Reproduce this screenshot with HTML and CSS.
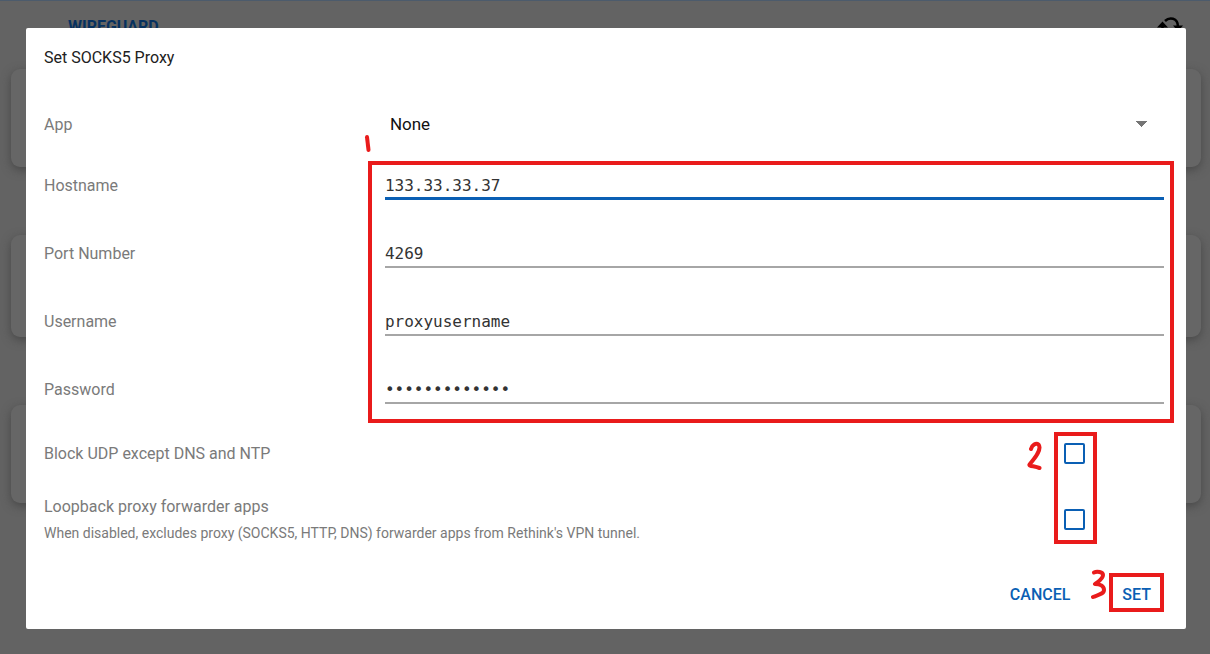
FILE: index.html
```html
<!DOCTYPE html>
<html lang="en">
<head>
<meta charset="utf-8">
<meta name="viewport" content="width=device-width, initial-scale=1">
<title>Set SOCKS5 Proxy</title>
<link rel="stylesheet" href="styles.css">
</head>
<body>
<div class="page" aria-hidden="true">
  <header class="page-header">
    <span class="page-title">WIREGUARD</span>
    <svg class="refresh" viewBox="0 0 28 28" fill="none" stroke="#000">
      <path stroke-width="2.500" d="M9 6C13 2 22 2 22 12M19 22C15 26 6.500 25 6.500 16V10"/>
      <path d="M17 10.500h10l-5 6zM1 12.500h11l-5.500-6z" fill="#000" stroke="none"/>
    </svg>
  </header>
  <div class="cards">
    <div class="card"></div>
    <div class="card card-tall"></div>
    <div class="card"></div>
  </div>
</div>
<main class="overlay">
  <form class="dialog" role="dialog" aria-labelledby="dialog-title">
    <h1 class="title" id="dialog-title">Set SOCKS5 Proxy</h1>
    <div class="row app-row">
      <label for="app">App</label>
      <select class="select" id="app"><option>None</option></select>
    </div>
    <div class="fields">
      <label for="host">Hostname</label>
      <input class="field field-active" id="host" type="text" value="133.33.33.37">
      <label for="port">Port Number</label>
      <input class="field" id="port" type="text" value="4269">
      <label for="user">Username</label>
      <input class="field" id="user" type="text" value="proxyusername">
      <label for="pass">Password</label>
      <input class="field" id="pass" type="password" value="proxypassword">
      <div class="mark mark-fields">
        <svg class="digit digit-one" viewBox="0 0 16 32"><path d="M7 7L8.500 20"/></svg>
      </div>
    </div>
    <div class="toggles">
      <div class="toggle">
        <label for="udp">Block UDP except DNS and NTP</label>
        <input class="check" id="udp" type="checkbox">
      </div>
      <div class="toggle">
        <div class="toggle-text">
          <label for="loop">Loopback proxy forwarder apps</label>
          <p class="hint">When disabled, excludes proxy (SOCKS5, HTTP, DNS) forwarder apps from Rethink's VPN tunnel.</p>
        </div>
        <input class="check" id="loop" type="checkbox">
      </div>
      <div class="mark mark-toggles">
        <svg class="digit digit-two" viewBox="0 0 16 32"><path d="M4 8C5 4 9 1.500 11.500 3.500C15 8 9 16 2.500 23.500C1.500 25 7 25 12.500 27"/></svg>
      </div>
    </div>
    <div class="actions">
      <button class="button" type="button">CANCEL</button>
      <button class="button button-set" type="button">SET
        <svg class="digit digit-three" viewBox="0 0 16 32"><path d="M3 3.500C6 2 12 3 12 6C12 10 8 12 4 15C9 15 13 17 13 21C13 25 7 26 2 28"/></svg>
      </button>
    </div>
  </form>
</main>
</body>
</html>
```
FILE: styles.css
```css
* { box-sizing: border-box; }

body {
  margin: 0;
  min-height: 100vh;
  background: #636363;
  font-family: Roboto, "Liberation Sans", sans-serif;
  font-size: 16px;
  color: #7a7a7a;
}

/* Dimmed screen behind the dialog */
.page {
  position: absolute;
  inset: 0;
  overflow: hidden;
  border-top: 1px solid #4c5b6c;
}
.page-header {
  display: flex;
  justify-content: space-between;
  height: 68px;
  padding: 14px 26px 0 68px;
}
.page-title {
  padding-top: 2px;
  font-size: 16px;
  line-height: 20px;
  font-weight: 700;
  color: #06315f;
}
.refresh { width: 28px; height: 28px; }
.cards {
  display: flex;
  flex-direction: column;
  gap: 68px;
  padding: 0 9px 0 11px;
}
.card {
  height: 98px;
  border-radius: 9px;
  background: #666;
  box-shadow: 0 3px 10px #484848;
}
.card-tall { height: 102px; }

/* Dialog */
.overlay {
  position: relative;
  padding: 28px 24px 25px 26px;
}
.dialog {
  padding: 20px 22px 17px 18px;
  border-radius: 2px;
  background: #fff;
}
.title {
  margin: 0 0 29px;
  font-size: 16px;
  line-height: 20px;
  font-weight: 400;
  color: #212121;
}
.row, .fields {
  display: grid;
  grid-template-columns: 3fr 7fr;
  column-gap: 7px;
  align-items: center;
}
.app-row { height: 54px; }
.select {
  width: 100%;
  height: 40px;
  padding: 0 5px;
  border: 0;
  appearance: none;
  background: conic-gradient(from -45deg at 50% 100%, #757575 90deg, transparent 0) right 17px center / 11px 6px no-repeat;
  font: inherit;
  font-size: 17px;
  color: #111;
}
.fields {
  position: relative;
  grid-auto-rows: 68px;
}
.field {
  width: 100%;
  height: 30px;
  padding: 2px 0 0;
  border: 0;
  border-bottom: 2px solid #a6a6a6;
  border-radius: 0;
  outline: 0;
  background: transparent;
  font-family: "Droid Sans Mono", "DejaVu Sans Mono", monospace;
  font-size: 16px;
  color: #333;
}
.field-active {
  padding-top: 3px;
  border-bottom: 3px solid #0a5fb4;
}

.toggles {
  position: relative;
  display: flex;
  flex-direction: column;
  gap: 8px;
}
.toggle {
  display: flex;
  align-items: center;
  justify-content: space-between;
  min-height: 61px;
  padding-right: 79px;
}
.toggle + .toggle { min-height: 52px; }
.toggle-text {
  padding-top: 2px;
  line-height: 26px;
}
.hint {
  margin: 0;
  font-size: 14px;
}
.check {
  width: 21px;
  height: 21px;
  margin: 0;
  border: 2px solid #0a5fb4;
  border-radius: 2px;
  appearance: none;
}
.actions {
  display: flex;
  justify-content: flex-end;
  gap: 26px;
  padding-top: 27px;
}
.button {
  height: 39px;
  padding: 3px 13px 0;
  border: 0;
  background: transparent;
  font: inherit;
  font-weight: 500;
  color: #0a5fb4;
}
.button-set {
  position: relative;
  padding: 3px 9px 0;
  border: 4px solid #e91b1b;
}

/* Hand-drawn callouts */
.mark {
  position: absolute;
  border: 4px solid #e91b1b;
  pointer-events: none;
}
.mark-fields {
  grid-column: 2;
  inset: 10px -10px 0 -17px;
}
.mark-toggles {
  top: 9px;
  right: 67px;
  bottom: 2px;
  width: 43px;
}
.digit {
  position: absolute;
  width: 16px;
  height: 32px;
  fill: none;
  stroke: #e91b1b;
  stroke-width: 4;
  stroke-linecap: round;
  stroke-linejoin: round;
}
.digit-one { left: -12px; top: -35px; }
.digit-two { left: -31px; top: 5px; }
.digit-three { left: -22px; top: -8px; }
```
